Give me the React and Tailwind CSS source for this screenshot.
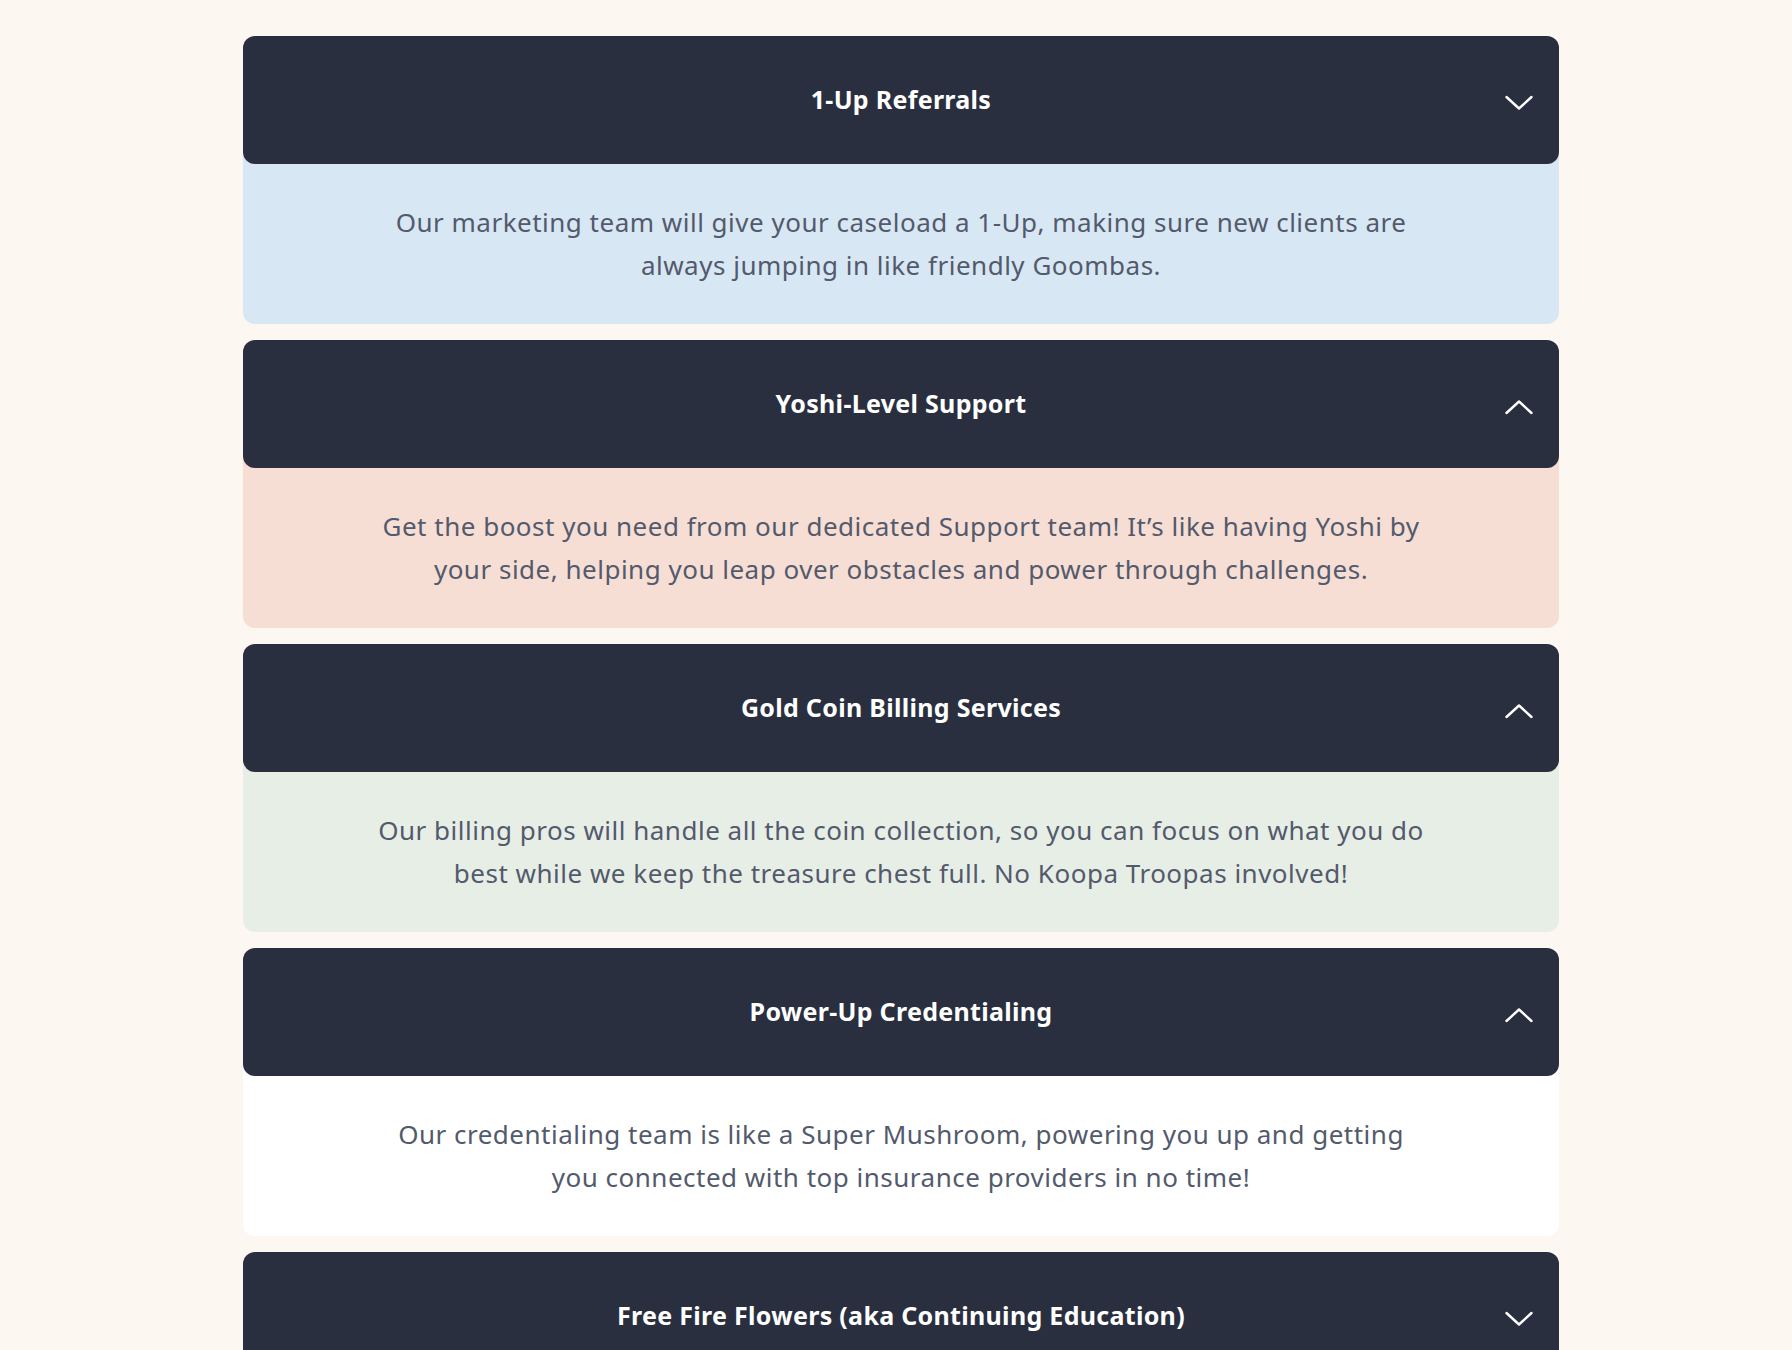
import React, { useState } from "react";

const items = [
  {
    title: "1-Up Referrals",
    lines: [
      "Our marketing team will give your caseload a 1-Up, making sure new clients are",
      "always jumping in like friendly Goombas.",
    ],
    bg: "bg-[#d8e7f4]",
    open: true,
    down: true,
  },
  {
    title: "Yoshi-Level Support",
    lines: [
      "Get the boost you need from our dedicated Support team! It\u2019s like having Yoshi by",
      "your side, helping you leap over obstacles and power through challenges.",
    ],
    bg: "bg-[#f6ded5]",
    open: true,
  },
  {
    title: "Gold Coin Billing Services",
    lines: [
      "Our billing pros will handle all the coin collection, so you can focus on what you do",
      "best while we keep the treasure chest full. No Koopa Troopas involved!",
    ],
    bg: "bg-[#e7eee6]",
    open: true,
  },
  {
    title: "Power-Up Credentialing",
    lines: [
      "Our credentialing team is like a Super Mushroom, powering you up and getting",
      "you connected with top insurance providers in no time!",
    ],
    bg: "bg-white",
    open: true,
  },
  {
    title: "Free Fire Flowers (aka Continuing Education)",
    lines: [
      "Level up your skills with free continuing education courses, so you can keep",
      "growing like a Fire Flower-powered hero.",
    ],
    bg: "bg-[#d8e7f4]",
    open: false,
    down: true,
  },
];

function Chevron({ down }) {
  return (
    <svg width="28" height="16" viewBox="0 0 28 16" fill="none" className="absolute right-[26px] top-1/2 -translate-y-[5px]">
      <polyline
        points={down ? "1.5,2 14,13.5 26.5,2" : "1.5,14 14,2.5 26.5,14"}
        stroke="white"
        strokeWidth="2.4"
        strokeLinecap="round"
        strokeLinejoin="round"
      />
    </svg>
  );
}

function Item({ item }) {
  const [open, setOpen] = useState(item.open);
  return (
    <div className="flex flex-col">
      <button
        onClick={() => setOpen(!open)}
        className="relative z-10 flex h-[128px] items-center justify-center rounded-xl bg-[#2a2f3f] text-[25px] font-bold tracking-[0.3px] text-white"
      >
        {item.title}
        <Chevron down={item.down} />
      </button>
      {open && (
        <div className={`-mt-3 flex h-[172px] items-center justify-center rounded-b-xl pt-3 ${item.bg}`}>
          <p className="text-center text-[26px] leading-[43px] tracking-[0.5px] text-[#535a6c]">
            {item.lines.map((line) => (
              <span key={line} className="block whitespace-nowrap">
                {line}
              </span>
            ))}
          </p>
        </div>
      )}
    </div>
  );
}

export default function App() {
  return (
    <div className="min-h-screen bg-[#fcf7f1] pt-[36px] pb-10" style={{ fontFamily: "'Noto Sans', sans-serif" }}>
      <div className="ml-[243px] flex w-[1316px] flex-col gap-4">
        {items.map((item) => (
          <Item key={item.title} item={item} />
        ))}
      </div>
    </div>
  );
}
